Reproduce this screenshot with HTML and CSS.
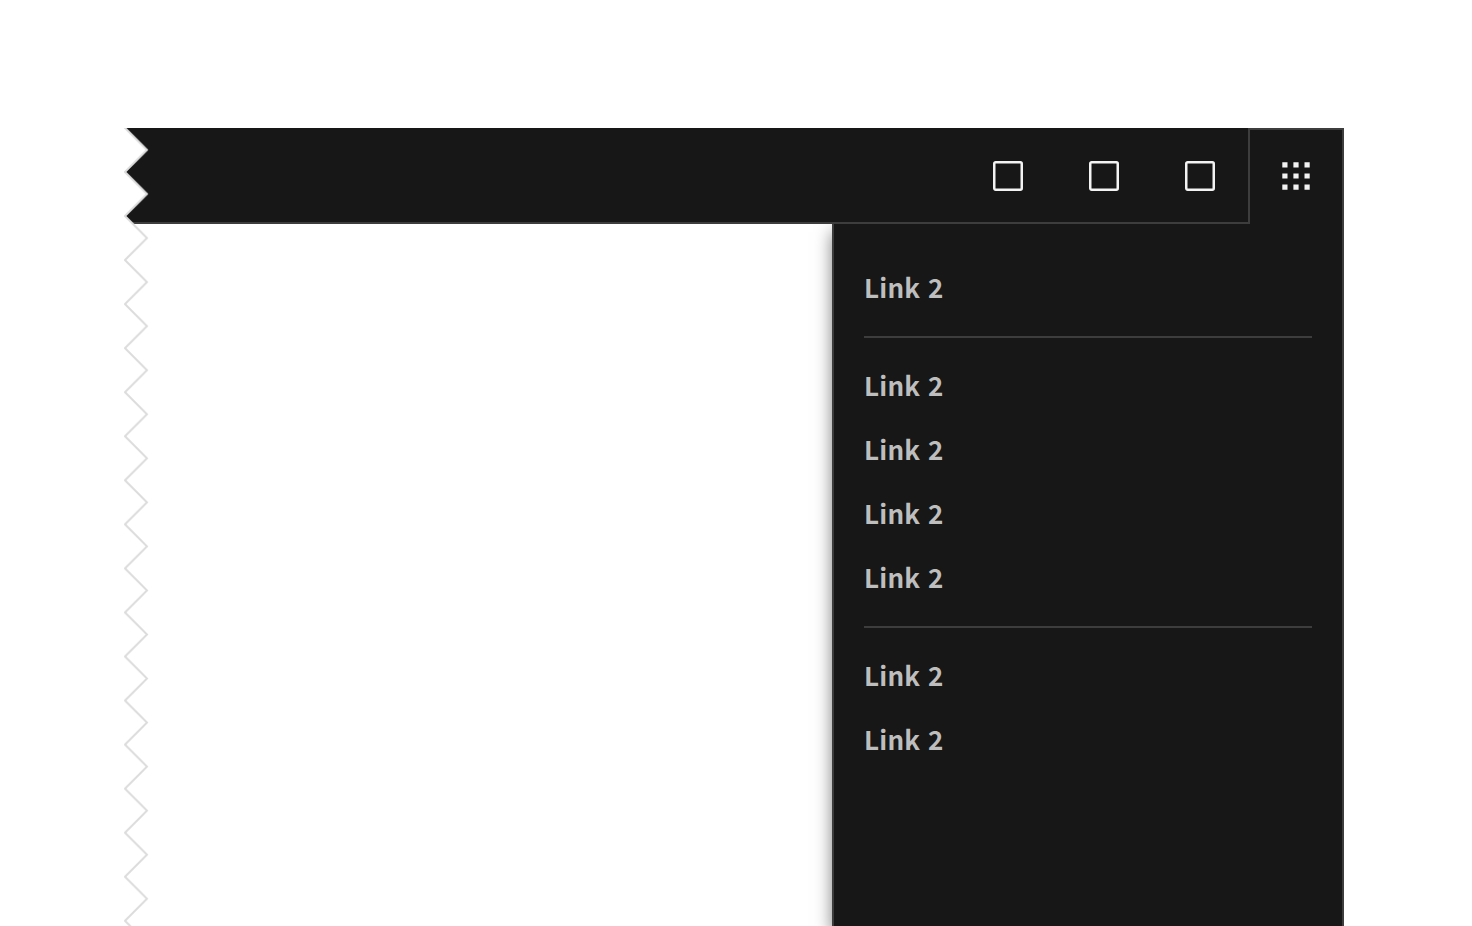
FILE: index.html
```html
<!DOCTYPE html>
<html lang="en">
<head>
<meta charset="utf-8">
<title>UI shell right panel</title>
<link rel="stylesheet" href="styles.css">
</head>
<body>
<div class="shell">
  <header class="header">
    <div class="actions">
      <button class="action" aria-label="Action 1"><svg class="icon" viewBox="0 0 32 32"><rect class="box" x="2.25" y="2.25" width="27.5" height="27.5" rx="1.4"/></svg></button>
      <button class="action" aria-label="Action 2"><svg class="icon" viewBox="0 0 32 32"><rect class="box" x="2.25" y="2.25" width="27.5" height="27.5" rx="1.4"/></svg></button>
      <button class="action" aria-label="Action 3"><svg class="icon" viewBox="0 0 32 32"><rect class="box" x="2.25" y="2.25" width="27.5" height="27.5" rx="1.4"/></svg></button>
    </div>
    <button class="action switcher" aria-label="App switcher">
      <svg class="icon" viewBox="0 0 32 32"><path class="dots" d="M2.3 2.3h5.2v5.2h-5.2zM13.4 2.3h5.2v5.2h-5.2zM24.5 2.3h5.2v5.2h-5.2zM2.3 13.4h5.2v5.2h-5.2zM13.4 13.4h5.2v5.2h-5.2zM24.5 13.4h5.2v5.2h-5.2zM2.3 24.5h5.2v5.2h-5.2zM13.4 24.5h5.2v5.2h-5.2zM24.5 24.5h5.2v5.2h-5.2z"/></svg>
    </button>
  </header>
  <main class="content">
    <nav class="panel">
      <a class="link">Link 2</a>
      <hr class="divider">
      <a class="link">Link 2</a>
      <a class="link">Link 2</a>
      <a class="link">Link 2</a>
      <a class="link">Link 2</a>
      <hr class="divider">
      <a class="link">Link 2</a>
      <a class="link">Link 2</a>
    </nav>
  </main>
  <svg class="tear" width="30" height="798" viewBox="0 0 30 798">
    <defs>
      <pattern id="zig" width="30" height="44.05" y="-0.1" patternUnits="userSpaceOnUse">
        <path class="paper" d="M0 0H1L23 22L1 44.05H0z"/>
        <path class="edge" d="M-1 -2L1 0L23 22L1 44.05L-1 46.05"/>
      </pattern>
    </defs>
    <rect width="30" height="798" fill="url(#zig)"/>
  </svg>
</div>
</body>
</html>
```
FILE: styles.css
```css
* { box-sizing: border-box; }
body {
  margin: 0;
  height: 926px;
  overflow: hidden;
  padding: 128px 128px 0 124px;
  background: #fff;
  font-family: "Noto Sans CJK SC", "Noto Sans", sans-serif;
}
.shell {
  position: relative;
  display: flex;
  flex-direction: column;
  height: 798px;
}
.header {
  display: flex;
  height: 96px;
  flex: none;
  background: #171717;
}
.actions {
  flex: 1;
  display: flex;
  justify-content: flex-end;
  border-bottom: 2px solid #3d3d3d;
}
.action {
  display: flex;
  width: 96px;
  height: 96px;
  padding: 0;
  align-items: center;
  justify-content: center;
  border: 0;
  background: none;
}
.switcher {
  border: 2px solid #3d3d3d;
  border-bottom: 0;
  padding-bottom: 2px;
}
.icon { width: 32px; height: 32px; flex: none; }
.box { fill: none; stroke: #f3f3f3; stroke-width: 2.5; }
.dots { fill: #f3f3f3; }
.content {
  flex: 1;
  display: flex;
  justify-content: flex-end;
  overflow: hidden;
}
.panel {
  display: flex;
  flex-direction: column;
  width: 512px;
  padding: 32px 30px;
  border: 2px solid #3d3d3d;
  border-width: 0 2px;
  background: #171717;
  box-shadow: 0 8px 16px rgba(0, 0, 0, .5);
}
.link {
  height: 64px;
  line-height: 62px;
  color: #bebebe;
  font-size: 26px;
  font-weight: 700;
  letter-spacing: .25px;
  word-spacing: 1.5px;
}
.divider {
  width: 100%;
  height: 2px;
  margin: 16px 0;
  border: 0;
  background: #3d3d3d;
}
.tear {
  position: absolute;
  top: 0;
  left: 0;
}
.paper { fill: #fff; }
.edge { fill: none; stroke: #dcdcdc; stroke-width: 2; }
```
